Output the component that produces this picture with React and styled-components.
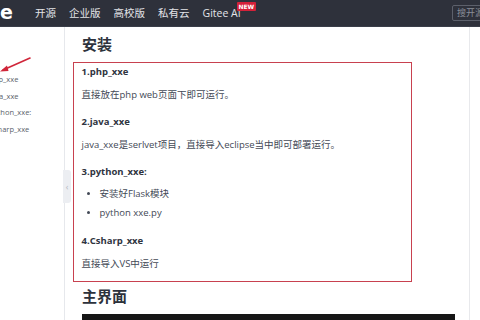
import React from 'react';
import styled, { createGlobalStyle } from 'styled-components';

const GlobalStyle = createGlobalStyle`
  html, body {
    margin: 0;
    padding: 0;
    background: #ffffff;
    font-family: "Open Sans", "Noto Sans CJK SC", sans-serif;
  }
  #root {
    width: 480px;
    height: 320px;
    overflow: hidden;
  }
`;

const Page = styled.div`
  width: 480px;
  height: 320px;
  display: flex;
  flex-direction: column;
  overflow: hidden;
`;

const Header = styled.header`
  height: 27px;
  flex: none;
  background-color: #2e313b;
  display: flex;
  align-items: center;
  box-sizing: border-box;
  border-bottom: 1px solid #3a3e49;
`;

const Logo = styled.div`
  width: 12px;
  color: #ffffff;
  font-family: "DejaVu Sans", sans-serif;
  font-weight: bold;
  font-size: 19px;
  line-height: 27px;
  margin-right: 23px;
  margin-top: -2px;
`;

const Nav = styled.nav`
  display: flex;
  align-items: center;
  gap: 13px;
  flex: 1;
`;

const NavItem = styled.a`
  position: relative;
  color: #e3e4e8;
  font-size: 10.5px;
  text-decoration: none;
  line-height: 27px;
  white-space: nowrap;
`;

const Badge = styled.span`
  position: absolute;
  top: 2px;
  left: 34px;
  background-color: #d42139;
  color: #ffffff;
  font-family: "DejaVu Sans", sans-serif;
  font-size: 6px;
  font-weight: bold;
  line-height: 9px;
  padding: 0 2px;
  border-radius: 1px;
`;

const Search = styled.div`
  width: 40px;
  height: 16px;
  margin-right: -12px;
  box-sizing: border-box;
  border: 1px solid #5c606b;
  border-radius: 2px;
  color: #8a8e98;
  font-size: 9px;
  line-height: 14px;
  padding-left: 4px;
  white-space: nowrap;
  overflow: hidden;
`;

const Body = styled.div`
  flex: 1;
  display: flex;
  position: relative;
`;

const Sidebar = styled.aside`
  width: 64px;
  flex: none;
  border-right: 1px solid #e6e8ec;
  position: relative;
  overflow: hidden;
  padding-top: 44px;
`;

const Arrow = styled.svg`
  position: absolute;
  left: 0;
  top: 28px;
`;

const TocList = styled.ul`
  list-style: none;
  margin: 0 0 0 -17px;
  padding: 0;
`;

const TocItem = styled.li`
  font-size: 7.5px;
  line-height: 16.5px;
  color: #5a5f6b;
  white-space: nowrap;
`;

const Handle = styled.div`
  position: absolute;
  left: 63px;
  top: 143px;
  width: 8px;
  height: 33px;
  background-color: #eceef2;
  border-radius: 0 3px 3px 0;
  color: #b4b8c0;
  font-size: 9px;
  display: flex;
  align-items: center;
  justify-content: center;
`;

const Main = styled.main`
  width: 405px;
  flex: none;
  border-right: 1px solid #e8e9ec;
  box-sizing: border-box;
  padding: 7px 0 0 8px;
`;

const Title = styled.h2`
  margin: 0 0 8px 9px;
  font-size: 15px;
  line-height: 20px;
  font-weight: bold;
  color: #2d323c;
`;

const Section = styled.div`
  width: 339px;
  box-sizing: border-box;
  border: 1.5px solid #c8414f;
  padding: 2px 8px 10px 7.5px;
`;

const Step = styled.h4`
  margin: ${({ $first }) => ($first ? '0' : '13px')} 0 0;
  font-size: 9.5px;
  line-height: 14px;
  font-weight: bold;
  color: #30353f;
`;

const Text = styled.p`
  margin: 9px 0 0;
  font-size: 9.5px;
  line-height: 14px;
  color: #434956;
  white-space: nowrap;
`;

const Bullets = styled.ul`
  margin: 5px 0 -1px;
  padding-left: 18px;
`;

const Bullet = styled.li`
  font-size: 9.5px;
  line-height: 19px;
  color: #434956;
  &::marker {
    font-size: 8px;
  }
`;

const Shot = styled.div`
  margin: 6px 0 0 9px;
  width: 373px;
  height: 20px;
  background-color: #161616;
`;

const Gutter = styled.div`
  flex: 1;
  background: #ffffff;
`;

export default function App() {
  return (
    <Page>
      <GlobalStyle />
      <Header>
        <Logo>e</Logo>
        <Nav>
          <NavItem>开源</NavItem>
          <NavItem>企业版</NavItem>
          <NavItem>高校版</NavItem>
          <NavItem>私有云</NavItem>
          <NavItem>
            Gitee AI
            <Badge>NEW</Badge>
          </NavItem>
        </Nav>
        <Search>搜开源</Search>
      </Header>
      <Body>
        <Sidebar>
          <Arrow width="34" height="20" viewBox="0 0 34 20">
            <line x1="3" y1="15" x2="30" y2="3" stroke="#d0263a" strokeWidth="1.6" strokeLinecap="round" />
            <path d="M0 16.5 L7 10.5 L8.5 16 Z" fill="#d0263a" />
          </Arrow>
          <TocList>
            <TocItem>1.php_xxe</TocItem>
            <TocItem>2.java_xxe</TocItem>
            <TocItem>3.python_xxe:</TocItem>
            <TocItem>4.Csharp_xxe</TocItem>
          </TocList>
        </Sidebar>
        <Handle>‹</Handle>
        <Main>
          <Title>安装</Title>
          <Section>
            <Step $first>1.php_xxe</Step>
            <Text>直接放在php web页面下即可运行。</Text>
            <Step>2.java_xxe</Step>
            <Text>java_xxe是serlvet项目，直接导入eclipse当中即可部署运行。</Text>
            <Step>3.python_xxe:</Step>
            <Bullets>
              <Bullet>安装好Flask模块</Bullet>
              <Bullet>python xxe.py</Bullet>
            </Bullets>
            <Step>4.Csharp_xxe</Step>
            <Text>直接导入VS中运行</Text>
          </Section>
          <Title as="h2" style={{ marginTop: 4 }}>主界面</Title>
          <Shot />
        </Main>
        <Gutter />
      </Body>
    </Page>
  );
}
